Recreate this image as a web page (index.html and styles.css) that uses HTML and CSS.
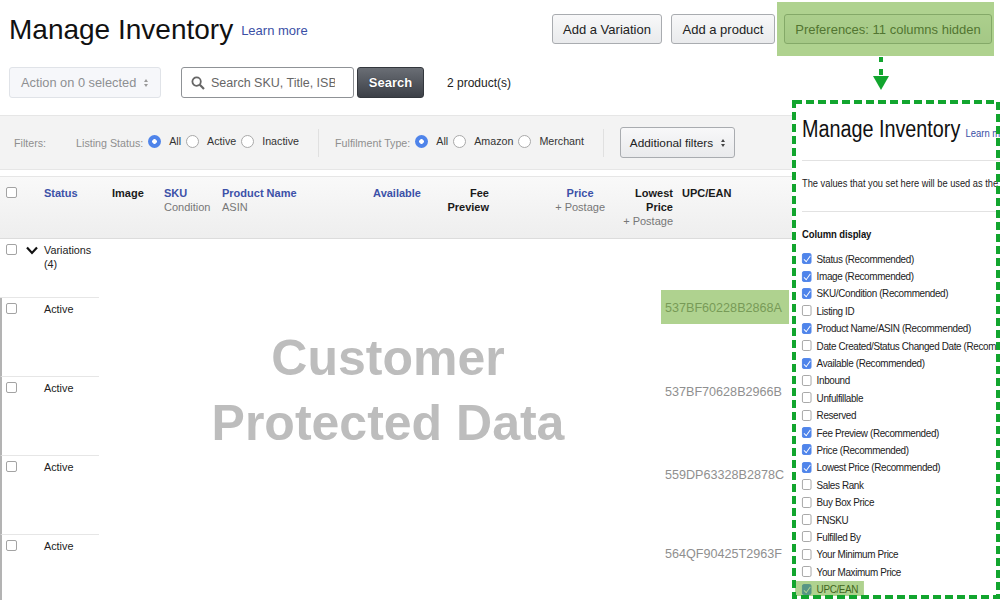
FILE: index.html
```html
<!DOCTYPE html>
<html lang="en">
<head>
<meta charset="utf-8">
<title>Manage Inventory</title>
<link rel="stylesheet" href="styles.css">
</head>
<body>
<div class="page">
  <header class="top">
    <h1 class="title">Manage Inventory</h1>
    <a class="learn">Learn more</a>
    <div class="top-actions">
      <button class="btn btn-var">Add a Variation</button>
      <button class="btn btn-add">Add a product</button>
      <button class="btn btn-pref">Preferences: 11 columns hidden</button>
    </div>
  </header>

  <div class="toolbar">
    <div class="action">Action on 0 selected<span class="updown"><i></i><i></i></span></div>
    <div class="search">
      <svg class="mag" width="14" height="14" viewBox="0 0 14 14"><circle cx="5.6" cy="5.6" r="4.2" fill="none" stroke="#666" stroke-width="1.8"/><path d="M8.8 8.8L13 13" stroke="#666" stroke-width="2.2"/></svg>
      <span class="search-text">Search SKU, Title, ISBN</span>
    </div>
    <button class="search-btn">Search</button>
    <span class="count">2 product(s)</span>
  </div>

  <div class="filters">
    <span class="f-label f-first">Filters:</span>
    <span class="f-label">Listing Status:</span>
    <span class="radio on"></span><span class="f-val">All</span>
    <span class="radio"></span><span class="f-val">Active</span>
    <span class="radio"></span><span class="f-val">Inactive</span>
    <span class="divider"></span>
    <span class="f-label">Fulfilment Type:</span>
    <span class="radio on"></span><span class="f-val">All</span>
    <span class="radio"></span><span class="f-val">Amazon</span>
    <span class="radio"></span><span class="f-val">Merchant</span>
    <span class="divider"></span>
    <button class="btn btn-filter">Additional filters<span class="updown dark"><i></i><i></i></span></button>
  </div>

  <div class="thead">
    <div class="th-check"><span class="cb"></span></div>
    <div class="th link">Status</div>
    <div class="th">Image</div>
    <div class="th link">SKU<small>Condition</small></div>
    <div class="th link">Product Name<small>ASIN</small></div>
    <div class="th link right">Available</div>
    <div class="th right">Fee<br>Preview</div>
    <div class="th link center-end">Price<small>+ Postage</small></div>
    <div class="th right">Lowest<br>Price<small>+ Postage</small></div>
    <div class="th upc-h">UPC/EAN</div>
  </div>

  <div class="row row-var">
    <div class="lead"><span class="cb"></span>
      <svg class="chev" width="12" height="9" viewBox="0 0 12 9"><path d="M1 1.6L6 7L11 1.6" fill="none" stroke="#111" stroke-width="2.2"/></svg>
      <span class="status">Variations<br>(4)</span></div>
  </div>
  <div class="row child">
    <div class="lead"><span class="cb"></span><span class="status">Active</span></div>
    <span class="upc u1">537BF60228B2868A</span>
  </div>
  <div class="row child">
    <div class="lead"><span class="cb"></span><span class="status">Active</span></div>
    <span class="upc u2">537BF70628B2966B</span>
  </div>
  <div class="row child">
    <div class="lead"><span class="cb"></span><span class="status">Active</span></div>
    <span class="upc u3">559DP63328B2878C</span>
  </div>
  <div class="row child">
    <div class="lead"><span class="cb"></span><span class="status">Active</span></div>
    <span class="upc u4">564QF90425T2963F</span>
  </div>
</div>

<div class="watermark">Customer<br>Protected Data</div>
<div class="hl hl-pref"></div>
<div class="hl hl-upc"></div>
<svg class="arrow" width="16" height="34" viewBox="0 0 16 34"><path d="M6 0h4v5H6zM6 12h4v6H6z" fill="#12a52e"/><path d="M0 19h16L8 33z" fill="#12a52e"/></svg>

<aside class="panel">
  <div class="panel-inner">
    <div class="p-head"><span class="p-title">Manage Inventory</span><a class="p-learn">Learn more</a></div>
    <p class="p-note">The values that you set here will be used as the default</p>
    <h2 class="p-sub">Column display</h2>
    <ul class="p-list">
      <li><span class="cb on"></span>Status (Recommended)</li>
      <li><span class="cb on"></span>Image (Recommended)</li>
      <li><span class="cb on"></span>SKU/Condition (Recommended)</li>
      <li><span class="cb"></span>Listing ID</li>
      <li><span class="cb on"></span>Product Name/ASIN (Recommended)</li>
      <li><span class="cb"></span>Date Created/Status Changed Date (Recommended)</li>
      <li><span class="cb on"></span>Available (Recommended)</li>
      <li><span class="cb"></span>Inbound</li>
      <li><span class="cb"></span>Unfulfillable</li>
      <li><span class="cb"></span>Reserved</li>
      <li><span class="cb on"></span>Fee Preview (Recommended)</li>
      <li><span class="cb on"></span>Price (Recommended)</li>
      <li><span class="cb on"></span>Lowest Price (Recommended)</li>
      <li><span class="cb"></span>Sales Rank</li>
      <li><span class="cb"></span>Buy Box Price</li>
      <li><span class="cb"></span>FNSKU</li>
      <li><span class="cb"></span>Fulfilled By</li>
      <li><span class="cb"></span>Your Minimum Price</li>
      <li><span class="cb"></span>Your Maximum Price</li>
      <li class="p-hl"><span class="cb on"></span>UPC/EAN</li>
    </ul>
  </div>
  <svg class="dash" width="208" height="499" viewBox="0 0 208 499"><rect x="2" y="2" width="204" height="495" fill="none" stroke="#12a52e" stroke-width="4" stroke-dasharray="8 4"/></svg>
</aside>
</body>
</html>
```

FILE: styles.css
```css
* { box-sizing: border-box; }
html, body { margin: 0; height: 600px; overflow: hidden; background: #fff; }
body { font-family: "Liberation Sans", Arial, sans-serif; color: #111; position: relative; }
button { font-family: inherit; cursor: default; }
.page { width: 1000px; height: 600px; overflow: hidden; }

/* top */
.top { display: flex; align-items: flex-start; height: 67px; padding: 14px 0 0 9px; }
.title { margin: 0; font-size: 28px; font-weight: 400; line-height: 32px; }
.learn { margin: 9px 0 0 8px; font-size: 13px; line-height: 16px; color: #3a4fa5; }
.top-actions { margin-left: auto; margin-right: 8px; display: flex; gap: 9px; }
.btn { height: 30px; padding: 0; border: 1px solid #a9acb0; border-radius: 3px; font-size: 13px; color: #222;
  background: linear-gradient(#f8f8f9, #e9eaec); }
.btn-var { width: 110px; }
.btn-add { width: 104px; }
.btn-pref { width: 208px; color: #444; }

/* toolbar */
.toolbar { display: flex; align-items: center; height: 31px; padding-left: 9px; }
.action { width: 152px; height: 31px; display: flex; align-items: center; padding-left: 11px; border: 1px solid #e0e3e8;
  border-radius: 3px; background: #f6f7fa; color: #8d8f92; font-size: 12.8px; white-space: nowrap; }
.updown { display: inline-flex; flex-direction: column; gap: 2px; margin-left: 8px; vertical-align: middle; }
.updown i { display: block; width: 0; height: 0; border-left: 2.5px solid transparent; border-right: 2.5px solid transparent; }
.updown i:first-child { border-bottom: 3px solid #9a9a9a; }
.updown i:last-child { border-top: 3px solid #9a9a9a; }
.updown.dark i:first-child { border-bottom-color: #444; }
.updown.dark i:last-child { border-top-color: #444; }
.search { width: 173px; height: 31px; margin-left: 20px; display: flex; align-items: center; padding-left: 9px; border: 1px solid #8f9296;
  border-radius: 3px; background: #fff; overflow: hidden; }
.mag { flex: none; }
.search-text { margin-left: 6px; width: 124px; overflow: hidden; white-space: nowrap; font-size: 12.5px; color: #666; }
.search-btn { width: 67px; height: 31px; margin-left: 3px; border: 1px solid #33373d; border-radius: 3px; color: #fff; font-size: 13px; font-weight: 700;
  background: linear-gradient(#6a6e75, #3c4047); text-shadow: 0 0 1px #222; }
.count { margin-left: 23px; font-size: 12px; color: #222; }

/* filters */
.filters { display: flex; align-items: center; height: 55px; margin-top: 17px; background: #f3f3f3; border-top: 1px solid #e6e6e6; border-bottom: 1px solid #e6e6e6;
  padding-left: 14px; font-size: 10.7px; }
.f-label { color: #8f8f8f; margin-right: 5px; font-size: 10.7px; white-space: nowrap; }
.f-first { margin-right: 30px; }
.f-val { color: #333; margin: -3px 5px 0 8px; white-space: nowrap; }
.radio { flex: none; width: 13px; height: 13px; margin-top: -2px; border-radius: 50%; border: 1px solid #a9a9a9; background: #fff; }
.radio.on { border: 0; background: radial-gradient(circle, #fff 0 2px, #4f84ea 2.6px); }
.divider { flex: none; width: 1px; height: 28px; background: #e0e0e0; margin: 0 16px 0 14px; }
.btn-filter { width: 115px; height: 31px; font-size: 11.8px; }

/* table */
.thead { display: grid; grid-template-columns: 44px 68px 52px 58px 118px 81px 68px 116px 68px 1fr; height: 63px; margin-top: 6px; padding-top: 9px;
  border-top: 1px solid #e6e6e6; border-bottom: 1px solid #dcdcdc; background: linear-gradient(#f9f9f9, #eeeeee); line-height: 14px; }
.th-check { padding-left: 6px; }
.th { font-weight: 700; color: #1a1a1a; white-space: nowrap; font-size: 11px; }
.th small { display: block; font-size: 11px; font-weight: 400; color: #777; }
.link { color: #3c51a8; }
.right { text-align: right; }
.center-end { justify-self: end; text-align: center; }
.upc-h { padding-left: 9px; }

.cb { display: inline-block; flex: none; position: relative; width: 11px; height: 11px; border: 1px solid #a3a3a3; border-radius: 2px; background: #fff; }
.cb.on { border-color: #4f84ea; background: #4f84ea; }
.cb.on::after { content: ""; position: absolute; left: 2.5px; top: 0; width: 3px; height: 7px; border: solid #fff; border-width: 0 1.5px 1.5px 0; transform: rotate(40deg); }

.row { position: relative; display: flex; font-size: 10.8px; line-height: 14px; }
.row-var { height: 59px; }
.child { height: 79px; }
.lead { width: 99px; display: flex; align-items: flex-start; padding: 5px 0 0 6px; border-bottom: 1px solid #e6e6e6; color: #222; }
.child .lead { border-left: 2px solid #b3b3b3; padding-left: 4px; }
.chev { margin: 2px 0 0 9px; }
.status { margin: -1px 0 0 6px; }
.child .status { margin-left: 27px; }
.upc { margin-left: 566px; font-size: 12.6px; color: #8f8f8f; white-space: nowrap; }
.u1 { margin-top: 3px; }
.u2 { margin-top: 8px; }
.u3 { margin-top: 12px; }
.u4 { margin-top: 12px; }

/* overlays */
.watermark { position: absolute; left: 110px; top: 326px; width: 556px; text-align: center; font-size: 50px; line-height: 65px; font-weight: 700; color: #bdbdbd; }
.hl { position: absolute; background: rgba(96, 165, 32, .5); }
.hl-pref { left: 777px; top: 2px; width: 217px; height: 54px; }
.hl-upc { left: 661px; top: 290px; width: 128px; height: 34px; }
.arrow { position: absolute; left: 873px; top: 57px; }

.panel { position: absolute; left: 792px; top: 100px; width: 208px; height: 499px; background: #fff; overflow: hidden; }
.dash { position: absolute; left: 0; top: 0; }
.panel-inner { width: 280px; padding: 13px 0 0 10px; transform: scaleX(.86); transform-origin: 10px 0; font-size: 12px; color: #222; }
.p-head { height: 48px; border-bottom: 1px solid #e2e2e2; white-space: nowrap; }
.p-title { font-size: 23px; line-height: 32px; color: #111; }
.p-learn { margin-left: 6px; font-size: 11px; color: #3a4fa5; }
.p-note { margin: 0; height: 51px; padding-top: 16px; border-bottom: 1px solid #e2e2e2; font-size: 10.8px; white-space: nowrap; }
.p-sub { margin: 15px 0 9px; font-size: 11px; line-height: 14px; font-weight: 700; letter-spacing: -.1px; color: #111; }
.p-list { list-style: none; margin: 0; padding: 0; }
.p-list li { display: flex; align-items: center; height: 17.4px; white-space: nowrap; font-size: 11.5px; letter-spacing: -.42px; }
.p-list .cb { margin-right: 6px; width: 11px; height: 11px; }
.p-hl { position: relative; }
.p-hl::after { content: ""; position: absolute; left: -8px; top: 1px; width: 80px; height: 15px; background: rgba(96, 165, 32, .5); }
```
